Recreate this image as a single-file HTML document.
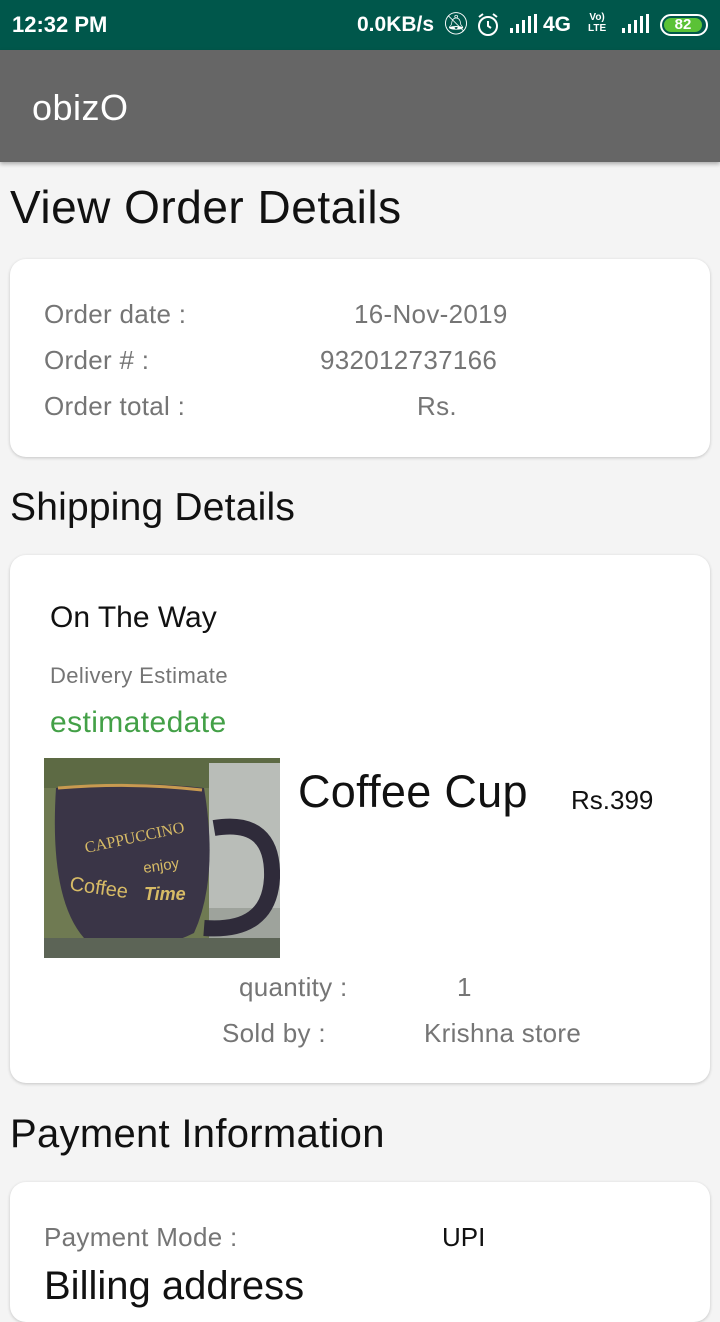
<!DOCTYPE html>
<html><head><meta charset="utf-8"><style>
*{margin:0;padding:0;box-sizing:border-box}
body{width:720px;height:1280px;overflow:hidden;background:#f4f4f4;font-family:"Liberation Sans",sans-serif;position:relative}
.a{position:absolute;white-space:nowrap}
.status{position:absolute;left:0;top:0;width:720px;height:50px;background:#00574b;color:#fff}
.bar{position:absolute;left:0;top:50px;width:720px;height:112px;background:#666;box-shadow:0 2px 4px rgba(0,0,0,.3)}
.card{position:absolute;left:10px;width:700px;background:#fff;border-radius:16px;box-shadow:0 1px 3px rgba(0,0,0,.2)}
.g{color:#757575;font-size:26px;letter-spacing:0.3px}
h{position:absolute;font-size:44px;color:#111}
</style></head><body>
<div class="status">
<div class="a" style="left:12px;top:12px;font-size:22px;font-weight:bold">12:32 PM</div>
<div class="a" style="left:357px;top:13px;font-size:21px;font-weight:bold">0.0KB/s</div>
<div class="a" style="left:442px;top:11px;font-size:22px">🔕︎</div>
<svg class="a" style="left:476px;top:12px" width="24" height="26"><circle cx="12" cy="14" r="9" fill="none" stroke="#fff" stroke-width="2"/><path d="M12 9v5l3 2M3 5l4-3M21 5l-4-3" stroke="#fff" stroke-width="2" fill="none"/></svg>
<svg class="a" style="left:510px;top:14px" width="30" height="20"><rect x="0" y="14" width="3" height="5" fill="#fff"/><rect x="6" y="10" width="3" height="9" fill="#fff"/><rect x="12" y="6" width="3" height="13" fill="#fff"/><rect x="18" y="2" width="3" height="17" fill="#fff"/><rect x="24" y="0" width="3" height="19" fill="#fff"/></svg>
<div class="a" style="left:543px;top:13px;font-size:21px;font-weight:bold">4G</div>
<div class="a" style="left:588px;top:12px;font-size:10px;font-weight:bold;line-height:11px;text-align:center">Vo)<br>LTE</div>
<svg class="a" style="left:622px;top:14px" width="30" height="20"><rect x="0" y="14" width="3" height="5" fill="#fff"/><rect x="6" y="10" width="3" height="9" fill="#fff"/><rect x="12" y="6" width="3" height="13" fill="#fff"/><rect x="18" y="2" width="3" height="17" fill="#fff"/><rect x="24" y="0" width="3" height="19" fill="#fff"/></svg>
<div class="a" style="left:660px;top:14px;width:48px;height:22px;border:2px solid #fff;border-radius:11px;padding:2px"><div style="background:#5bc236;height:14px;border-radius:7px;width:38px;font-size:15px;font-weight:bold;line-height:14px;text-align:center">82</div></div>
</div>
<div class="bar"><div class="a" style="left:32px;top:37px;color:#fff;font-size:36px;font-weight:500;letter-spacing:0.5px">obizO</div></div>
<h class="a" style="left:10px;top:180px;font-size:46px;letter-spacing:0.5px">View Order Details</h>
<div class="card" style="top:259px;height:198px"></div>
<div class="a g" style="left:44px;top:299px">Order date :</div>
<div class="a g" style="left:354px;top:299px">16-Nov-2019</div>
<div class="a g" style="left:44px;top:345px">Order # :</div>
<div class="a g" style="left:320px;top:345px">932012737166</div>
<div class="a g" style="left:44px;top:391px">Order total :</div>
<div class="a g" style="left:417px;top:391px">Rs.</div>
<h class="a" style="left:10px;top:486px;font-size:39px;letter-spacing:0.2px">Shipping Details</h>
<div class="card" style="top:555px;height:528px"></div>
<div class="a" style="left:50px;top:601px;font-size:30px;color:#111">On The Way</div>
<div class="a" style="left:50px;top:663px;font-size:22px;color:#757575;letter-spacing:0.4px">Delivery Estimate</div>
<div class="a" style="left:50px;top:706px;font-size:30px;color:#43a047;letter-spacing:0.4px">estimatedate</div>
<svg class="a" style="left:44px;top:758px" width="236" height="200">
<rect width="236" height="200" fill="#6f7a52"/><rect x="0" y="0" width="236" height="30" fill="#5d6a44"/>
<rect x="165" y="5" width="71" height="195" fill="#b9bdb8"/><rect x="165" y="150" width="71" height="50" fill="#9ea39c"/>
<path d="M170 70 Q230 60 228 120 Q225 175 160 170" stroke="#2f2b3a" stroke-width="16" fill="none"/>
<path d="M12 30 Q90 22 160 30 Q175 120 150 175 Q100 200 40 180 Q5 140 12 30Z" fill="#3a3547"/>
<path d="M14 30 Q90 24 158 32" stroke="#c89a50" stroke-width="3" fill="none"/>
<text x="42" y="95" font-size="16" fill="#d7bb66" font-family="Liberation Serif" transform="rotate(-12 42 95)">CAPPUCCINO</text>
<text x="100" y="115" font-size="15" fill="#d7bb66" transform="rotate(-8 100 115)">enjoy</text>
<text x="25" y="132" font-size="20" fill="#d7bb66" transform="rotate(8 25 132)">Coffee</text>
<text x="100" y="142" font-size="18" font-style="italic" font-weight="bold" fill="#d7bb66">Time</text>
<rect x="0" y="180" width="236" height="20" fill="#5c6456"/></svg>
<div class="a" style="left:298px;top:766px;font-size:45px;color:#111;letter-spacing:0.3px">Coffee Cup</div>
<div class="a" style="left:571px;top:785px;font-size:26px;color:#111">Rs.399</div>
<div class="a g" style="left:239px;top:972px">quantity :</div>
<div class="a g" style="left:457px;top:972px">1</div>
<div class="a g" style="left:222px;top:1018px">Sold by :</div>
<div class="a g" style="left:424px;top:1018px">Krishna store</div>
<h class="a" style="left:10px;top:1112px;font-size:40px;letter-spacing:0.3px">Payment Information</h>
<div class="card" style="top:1182px;height:140px"></div>
<div class="a g" style="left:44px;top:1222px">Payment Mode :</div>
<div class="a" style="left:442px;top:1222px;font-size:26px;color:#111">UPI</div>
<div class="a" style="left:44px;top:1264px;font-size:40px;color:#111">Billing address</div>
</body></html>
